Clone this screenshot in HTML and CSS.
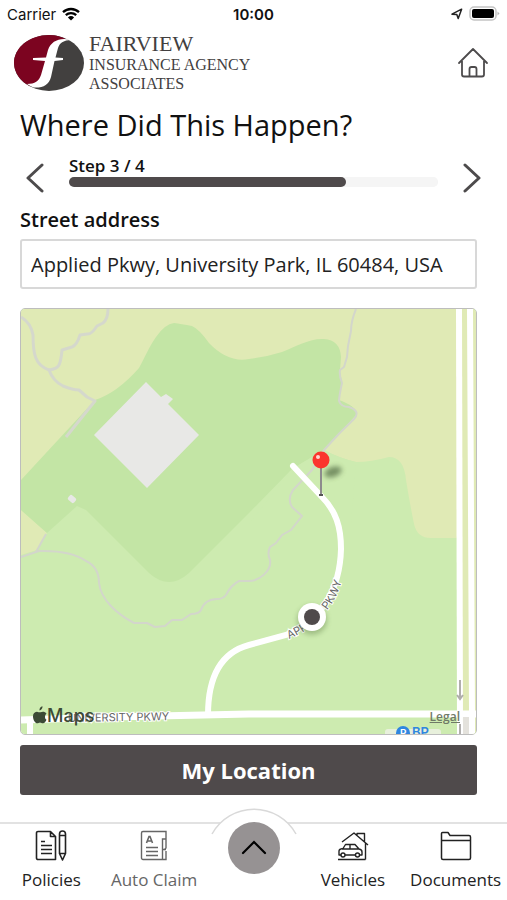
FILE: index.html
```html
<!DOCTYPE html>
<html lang="en">

<head>
    <meta charset="utf-8" />
    <meta name="viewport" content="width=device-width, initial-scale=1">
    <title>Where Did This Happen?</title>
    <link rel="stylesheet" href="styles.css">
</head>

<body>
    <div class="status-bar">
        <div class="status-left">
            <span>Carrier</span>
            <svg width="18" height="14" viewBox="0 0 18 14" aria-hidden="true">
                <path d="M1 5.2a11.6 11.6 0 0 1 16 0M3.8 8.2a7.6 7.6 0 0 1 10.4 0" fill="none" stroke="#000" stroke-width="2.3" />
                <path d="M9 13.6 5.9 10.4a4.6 4.6 0 0 1 6.2 0z" />
            </svg>
        </div>
        <span class="clock">10:00</span>
        <div class="status-right">
            <svg width="12" height="12" viewBox="0 0 12 12" aria-hidden="true">
                <path d="M1 6.2 10.6 1.2 7.2 10.6 5.8 6.6z" fill="none" stroke="#222" stroke-width="1.5" stroke-linejoin="round" />
            </svg>
            <svg width="31" height="16" viewBox="0 0 31 16" aria-hidden="true">
                <rect x="1" y="1" width="26" height="13" rx="4" fill="#fff" stroke="#c4c4c4" stroke-width="1.5" />
                <rect x="3" y="3" width="22" height="9" rx="2" />
                <path d="M28.5 5.5 30.5 7.5 28.5 9.5z" fill="#b5b5b5" />
            </svg>
        </div>
    </div>

    <header class="header">
        <div class="logo">
            <svg width="72" height="58" viewBox="0 0 72 58" aria-hidden="true">
                <ellipse cx="36" cy="29" rx="35" ry="28" fill="#42403f" />
                <path d="M54 6C46 7 42 12 40 20L35 40C32 48 26 52 17 52C8 48 1 39 1 29C1 13 17 1 36 1C43 1 49 2.5 54 6z" fill="#7c0420" />
                <path d="M58 6C47 3 38 7 35 16L33 23.5 20 24 20 26 32 27 28 41C26 47 22 50 14 50C17 52 19 53 21 53.5C30 54 36 51 38 43L41.5 27 50 26 50 24 42.5 23.5 45 14C47 8 51 6.5 58 6z" fill="#fff" />
            </svg>
            <div class="logo-text">
                <span class="logo-name">FAIRVIEW</span>
                <span>INSURANCE AGENCY</span>
                <span>ASSOCIATES</span>
            </div>
        </div>
        <button class="icon-btn" type="button" aria-label="Home">
            <svg width="32" height="32" viewBox="0 0 32 32" fill="none" stroke="#4d4b4c" stroke-width="1.8" stroke-linecap="round" stroke-linejoin="round">
                <path d="M2 16 16 2 30 16M5 14V27.5a2 2 0 0 0 2 2H25a2 2 0 0 0 2-2V14M12.5 29V22a2 2 0 0 1 2-2h3a2 2 0 0 1 2 2V29" />
            </svg>
        </button>
    </header>

    <main class="content">
        <h1>Where Did This Happen?</h1>

        <div class="steps">
            <button class="icon-btn" type="button" aria-label="Previous step">
                <svg width="28" height="30" viewBox="0 0 28 30" fill="none" stroke="#4d4b4c" stroke-width="3" stroke-linecap="round" stroke-linejoin="round">
                    <path d="M22 2 8 15 22 28" />
                </svg>
            </button>
            <div class="step-info">
                <label for="progress">Step 3 / 4</label>
                <progress id="progress" value="3" max="4"></progress>
            </div>
            <button class="icon-btn" type="button" aria-label="Next step">
                <svg width="28" height="30" viewBox="0 0 28 30" fill="none" stroke="#4d4b4c" stroke-width="3" stroke-linecap="round" stroke-linejoin="round">
                    <path d="M10 2 24 15 10 28" />
                </svg>
            </button>
        </div>

        <label class="field-label" for="address">Street address</label>
        <input class="field" id="address" type="text" value="Applied Pkwy, University Park, IL 60484, USA">

        <div class="map">
            <svg class="map-canvas" viewBox="0 0 455 425" role="img" aria-label="Map">
                <defs>
                    <path id="roadLabel" d="M268 330Q294 319 308 299Q320 283 324 256" />
                    <filter id="soft" x="-50%" y="-80%" width="200%" height="260%">
                        <feGaussianBlur stdDeviation="2.5" />
                    </filter>
                </defs>
                <!-- ground -->
                <rect width="455" height="425" fill="#cdebb0" />
                <path d="M0 0H455V425H441V229H410Q396 229 393 215Q388 190 385 171Q383 148 368 148Q350 153 335 153Q318 149 303 141L200 120L0 175z" fill="#e0eab5" />
                <path d="M0 201 26 224 16 241 0 246z" fill="#e0eab5" />
                <path d="M0 171 74 91Q96 84 118 59C124 48 128 38 135 28Q144 15 153 14Q160 15 171 17Q178 20 188 34Q207 54 228 50Q245 48 261 43C275 37 290 29 303 30Q319 31 320 48L319 61 321 74 318 91Q335 97 336 105L303 141 271 160 228 204 168 264Q148 282 128 264L65 201 56 197 26 224 0 201z" fill="#c3e5a5" />
                <path d="M271 160 303 141Q318 149 335 153L330 215H228z" fill="#cdebb0" />
                <!-- buildings -->
                <path d="M125 73 140 88 145 85 152 90 147 95 178 126 126 179 73 126z" fill="#e8e8e6" />
                <rect x="47" y="187" width="8" height="6" rx="2" transform="rotate(40 51 190)" fill="#e8e8e6" />
                <!-- trails -->
                <g fill="none" stroke="#d5d8cc" stroke-width="3" stroke-linejoin="round">
                    <path d="M0 8Q10 14 12 26C12 45 14 56 28 61Q32 72 42 77Q52 81 58 81L66 88 74 92 45 128" />
                    <path d="M87 0Q87 10 82 14L76 17Q70 26 66 25L59 26Q56 36 51 38L41 41Q40 52 38 56T28 61" />
                </g>
                <g fill="none" stroke="#d3d6cb" stroke-width="2" stroke-linejoin="round">
                    <path d="M335 0Q330 12 330 22L327 37 326 48 323 58 319 61Q318 66 321 74Q318 88 318 92Q320 98 328 98Q340 102 333 110Q318 124 303 141L291 161 272 181Q266 190 271 198L281 207 270 221 261 226 255 234 249 238Q246 244 249 251C251 262 238 272 228 272H218Q210 276 205 286Q202 290 196 290Q184 290 180 301Q178 305 170 305L161 311H151L144 317 134 318 126 314H113C96 305 80 291 78 274Q78 258 65 252Q49 241 18 242L0 248" />
                    <path d="M25 225 15 243" />
                </g>
                <!-- roads -->
                <g fill="none" stroke="#fff" stroke-width="6">
                    <path d="M272 157 301 188C315 202 320 218 320 240C319 280 301 311 265 326L228 336Q187 347 187 406" stroke-linecap="round" />
                    <path d="M0 411 90 408 228 405H455" stroke-width="7" />
                    <path d="M9 411V425" />
                    <path d="M438 0 439 425" />
                    <path d="M449 0 451 404V425" />
                </g>
                <path d="M442 408H448V425H442z" fill="#e4e2dc" />
                <path d="M439 371V390M436 386 439 390 442 386M439 415V425" fill="none" stroke="#b0aeac" stroke-width="2" />
                <!-- labels -->
                <text class="road-name" x="47" y="413" transform="rotate(-1 47 413)">UNIVERSITY PKWY</text>
                <text class="road-name"><textPath href="#roadLabel">APPLIED PKWY</textPath></text>
                <rect x="364" y="420" width="56" height="10" rx="3" fill="#e8f0dc" />
                <circle cx="382" cy="424" r="7" fill="#2f86e0" />
                <text class="poi-badge" x="379" y="428">P</text>
                <text class="poi" x="391" y="428">BP</text>
                <!-- current position -->
                <circle cx="291" cy="311" r="15" fill="#4b6a35" opacity=".35" filter="url(#soft)" />
                <circle cx="291" cy="308" r="14" fill="#fff" />
                <circle cx="291" cy="308" r="8" fill="#4f4a4b" />
                <!-- pin -->
                <ellipse cx="312" cy="163" rx="9" ry="5" transform="rotate(-20 312 163)" fill="#3c5530" opacity=".6" filter="url(#soft)" />
                <path d="M300 158V186" stroke="#8d8b8d" stroke-width="2" />
                <path d="M298 186H302" stroke="#555" stroke-width="2" />
                <circle cx="300" cy="151" r="8.5" fill="#fb352e" />
                <circle cx="297" cy="148" r="2" fill="#ffd5d0" />
                <!-- map provider -->
                <path d="M18.5 401.5C18.2 399.5 19.5 397.8 21.5 397.3C21.7 399.4 20.3 401.3 18.5 401.5zM24 408C24 406 25 405 25.5 404.5C24 402.3 21.5 402.3 19.5 403.2C18.5 403.6 17.8 403.2 16.5 402.9C13.5 402.5 12 404.8 12 407.5C12 411 14.3 414.3 16.2 414.3C17.3 414.3 17.8 413.7 19 413.7S20.8 414.3 21.9 414.3C23.7 414.3 25 412 25.5 410.7C24.6 410.2 24 409.3 24 408z" fill="#3c4a35" />
                <text class="provider" x="26" y="413">Maps</text>
            </svg>
            <a class="legal" href="#">Legal</a>
        </div>

        <button class="primary-btn" type="button">My Location</button>
    </main>

    <nav class="tab-bar">
        <a class="tab" href="#">
            <svg width="32" height="32" viewBox="0 0 32 32" fill="none" stroke="#222" stroke-width="1.6" stroke-linejoin="round">
                <path d="M3 1.5H15.5L20.5 6.5V29.5H3a1.5 1.5 0 0 1-1.5-1.5V3A1.5 1.5 0 0 1 3 1.5zM15.5 1.5V6.5H20.5M6 11.5H10M6 15.5H17M6 19.5H17M6 23.5H17" />
                <path d="M24.5 4a3 3 0 0 1 6 0V23.5L27.5 30 24.5 23.5zM24.5 5.5H30.5M24.5 23.5H30.5" />
            </svg>
            <span>Policies</span>
        </a>
        <a class="tab muted" href="#">
            <svg width="32" height="32" viewBox="0 0 32 32" fill="none" stroke="#666" stroke-width="1.4">
                <path d="M28 9V1.5H5A1.5 1.5 0 0 0 3.5 3V28A1.5 1.5 0 0 0 5 29.5H24.5V9H28V18L26 20M28 21V29.5H24.5M24.5 19.5H28M8 17.5H20M8 21.5H20M8 25.5H20" />
                <path d="M8.500 13 11 6.500H12L14.500 13M9.500 11H13.500" stroke-width="1.6" />
            </svg>
            <span>Auto Claim</span>
        </a>
        <div class="tab-center">
            <svg class="tab-arc" width="88" height="27" viewBox="0 0 88 27" aria-hidden="true">
                <path d="M2 26A48 48 0 0 1 86 26" fill="#fff" stroke="#d9d9d9" stroke-width="1.5" />
            </svg>
            <button class="menu-btn" type="button" aria-label="Open menu">
                <svg width="28" height="16" viewBox="0 0 28 16" fill="none" stroke="#000" stroke-width="2.2" stroke-linecap="round">
                    <path d="M3 13 14 2 25 13" />
                </svg>
            </button>
        </div>
        <a class="tab" href="#">
            <svg width="32" height="32" viewBox="0 0 32 32" fill="none" stroke="#222" stroke-width="1.4" stroke-linejoin="round">
                <path d="M5 12 17 3 31 15M20 5V3.5H27.5V11.5M28.5 13V29.5M1 29.5H28.5" />
                <path d="M4 25H2V21Q2 19 6 18.5L8.500 14.5H18L22 19Q25 19.5 25 22V25H23M8 25H18M5 19H22M13 15V19" />
                <circle cx="6" cy="25" r="2" />
                <circle cx="20.5" cy="25" r="2" />
            </svg>
            <span>Vehicles</span>
        </a>
        <a class="tab" href="#">
            <svg width="32" height="32" viewBox="0 0 32 32" fill="none" stroke="#222" stroke-width="1.5" stroke-linejoin="round">
                <path d="M1.5 28V3.5Q1.5 2.5 2.5 2.5H8L10 5.5H29Q30.5 5.5 30.5 7V28Q30.5 29.5 29 29.5H3Q1.5 29.5 1.5 28zM1.5 10.5H30.5" />
            </svg>
            <span>Documents</span>
        </a>
    </nav>
</body>

</html>
```
FILE: styles.css
```css
* {
    box-sizing: border-box;
}

body {
    margin: 0;
    min-height: 100vh;
    display: flex;
    flex-direction: column;
    background-color: white;
    color: #111;
    font-family: 'Open Sans', sans-serif;
}

svg {
    display: block;
}

button {
    border: none;
    padding: 0;
    background: none;
    font-family: inherit;
    cursor: pointer;
}

.status-bar {
    display: grid;
    grid-template-columns: 1fr auto 1fr;
    align-items: center;
    height: 28px;
    padding: 0 7px;
    font-family: Inter, sans-serif;
    font-size: 15px;
}

.status-left,
.status-right {
    display: flex;
    align-items: center;
    gap: 6px;
}

.status-right {
    justify-content: flex-end;
}

.clock {
    font-weight: 600;
}

.header {
    display: flex;
    align-items: center;
    justify-content: space-between;
    padding: 5px 18px 0 13px;
}

.logo {
    display: flex;
    align-items: center;
    gap: 4px;
}

.logo-text {
    display: flex;
    flex-direction: column;
    color: #42403f;
    font-family: 'Liberation Serif', serif;
    font-size: 16px;
    line-height: 19px;
}

.logo-name {
    font-size: 22px;
    line-height: 22px;
}

.content {
    flex: 1;
    padding: 12px 30px 20px 20px;
}

h1 {
    margin: 0 0 10px;
    font-size: 29px;
    font-weight: 400;
    line-height: 40px;
}

.steps {
    display: flex;
    align-items: flex-end;
    justify-content: space-between;
    margin: 0 -6px 12px 0;
}

.step-info {
    flex: 1;
    margin: 0 17px 6px 21px;
    display: flex;
    flex-direction: column;
    font-size: 17px;
    font-weight: 600;
    line-height: 22px;
}

progress {
    appearance: none;
    display: block;
    width: 100%;
    height: 10px;
    border: none;
    border-radius: 5px;
    background-color: #f5f5f5;
}

progress::-webkit-progress-bar {
    border-radius: 5px;
    background-color: #f5f5f5;
}

progress::-webkit-progress-value {
    border-radius: 5px;
    background-color: #4f4a4b;
}

.field-label {
    display: block;
    margin-bottom: 4px;
    font-size: 20px;
    font-weight: 600;
    line-height: 30px;
}

.field {
    display: block;
    width: 100%;
    height: 50px;
    padding: 0 9px;
    border: 2px solid #d8d8d8;
    border-radius: 3px;
    background-color: white;
    color: #222;
    font-family: inherit;
    font-size: 20px;
}

.map {
    position: relative;
    margin: 19px 0 10px;
    border: 1px solid #bdbdbd;
    border-radius: 5px;
    overflow: hidden;
}

.map-canvas {
    width: 100%;
    height: auto;
}

.road-name {
    fill: #666;
    stroke: #fff;
    stroke-width: 2px;
    paint-order: stroke;
    font-family: Inter, sans-serif;
    font-size: 11px;
    font-weight: 400;
}

.poi,
.poi-badge {
    fill: #2f86e0;
    font-family: Inter, sans-serif;
    font-size: 13px;
    font-weight: 600;
}

.poi-badge {
    fill: #fff;
    font-size: 10px;
}

.provider {
    fill: #3c4a35;
    font-family: Inter, sans-serif;
    font-size: 18px;
    font-weight: 500;
}

.legal {
    position: absolute;
    right: 16px;
    bottom: 9px;
    color: #6f7a67;
    font-size: 12px;
    font-weight: 600;
    line-height: 16px;
}

.primary-btn {
    display: block;
    width: 100%;
    height: 50px;
    border-radius: 3px;
    background-color: #4f4a4b;
    color: white;
    font-size: 22px;
    font-weight: 700;
}

.tab-bar {
    display: grid;
    grid-template-columns: 1fr 1fr 96px 1fr 1fr;
    height: 78px;
    border-top: 2px solid #e2e2e2;
}

.tab {
    display: flex;
    flex-direction: column;
    align-items: center;
    gap: 6px;
    padding-top: 6px;
    color: #222;
    font-size: 17px;
    line-height: 24px;
    text-decoration: none;
}

.muted {
    color: #666;
}

.tab-center {
    position: relative;
    display: flex;
    justify-content: center;
}

/* the arc rises over the top border of the bar */
.tab-arc {
    position: absolute;
    top: -16px;
}

.menu-btn {
    position: relative;
    display: flex;
    align-items: center;
    justify-content: center;
    width: 52px;
    height: 52px;
    margin-top: -2px;
    border-radius: 50%;
    background-color: #969293;
}
```
